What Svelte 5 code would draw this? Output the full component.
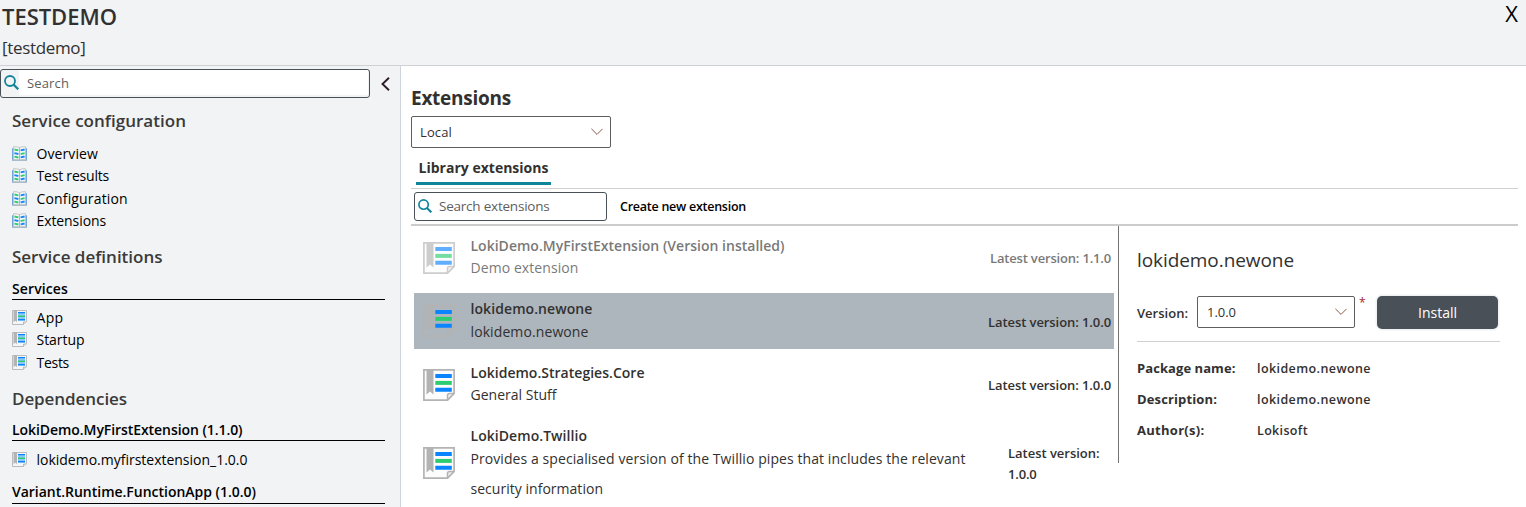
<script>
  // Tracks a label out (or in) so that it occupies the given width.
  function fit(node, width) {
    const natural = node.getBoundingClientRect().width;
    const spacing = (width - natural) / node.textContent.length;
    node.style.letterSpacing = spacing.toFixed(3) + 'px';
  }

  const config = [
    ['Overview', 61.5],
    ['Test results', 72.5],
    ['Configuration', 91.3],
    ['Extensions', 69.6]
  ];
  const services = [
    ['App', 27],
    ['Startup', 48],
    ['Tests', 32.5]
  ];
  const extensions = [
    { name: 'LokiDemo.MyFirstExtension (Version installed)', nw: 314, lines: [['Demo extension', 108]], version: 'Latest version: 1.1.0', vw: 121, state: 'installed' },
    { name: 'lokidemo.newone', nw: 122, lines: [['lokidemo.newone', 118]], version: 'Latest version: 1.0.0', vw: 123, state: 'selected' },
    { name: 'Lokidemo.Strategies.Core', nw: 174, lines: [['General Stuff', 86]], version: 'Latest version: 1.0.0', vw: 123, state: 'plain' },
    {
      name: 'LokiDemo.Twillio', nw: 116.5, state: 'tall',
      lines: [['Provides a specialised version of the Twillio pipes that includes the relevant', 495], ['security information', 132.5]]
    }
  ];
  const details = [
    ['Package name:', 98.5, 'lokidemo.newone', 114],
    ['Description:', 80, 'lokidemo.newone', 114],
    ['Author(s):', 67.5, 'Lokisoft', 51]
  ];
</script>

{#snippet page(size)}
  <svg class="page" width={size} height={size} viewBox="0 0 32 32">
    <path class="paper" d="M.9.9h30.2v23.6l-6.600 6.600H.9z" />
    <path d="M3.500 0h7v25.500l-3.500-3-3.500 3z" fill="#b3b3b3" />
    <path class="curl" d="M24.500 31v-4.500q0-2 2-2H31z" />
    <path d="M12.300 5h16.500v4H12.300zM12.300 18.800h16.500v4H12.300z" fill="#0a84ff" />
    <path d="M12.300 11.900h16.500v4H12.300z" fill="#2ecc71" />
  </svg>
{/snippet}

{#snippet smallPage()}
  <svg width="15" height="15" viewBox="0 0 15 15">
    <path d="M.5.500h14v11l-3 3H.5z" fill="#f4f5f6" stroke="#b9bbbd" />
    <path d="M1.500 0H5v12l-1.700-1.300L1.500 12z" fill="#b3b3b3" />
    <path d="M11.500 14.500v-2.500h3" fill="#ddd" stroke="#b9bbbd" />
    <path d="M6 2h7v9H6z" fill="#8cc8f5" />
    <path d="M6 2h7v1.300H6zM6 9h7v1.300H6z" fill="#0a84ff" />
    <path d="M6 5.600h7v1.400H6z" fill="#2ecc71" />
  </svg>
{/snippet}

{#snippet book()}
  <svg width="15" height="15" viewBox="0 0 15 15">
    <path d="M0 2.300h2V14H0zM13 2.300h2V14h-2z" fill="#75a5d2" />
    <path d="M0 13.500h15V15H0z" fill="#a9bccd" />
    <path d="M1.500.7Q5 .3 7.500 1.700 10 .3 13.500.7V13.500Q10 13 7.500 14 5 13 1.500 13.500z" fill="#f6f6f6" stroke="#c0c2c4" stroke-width=".9" />
    <path d="M7.500 1.500V14" stroke="#b5b5b5" />
    <path d="M2.400 3.500l4 .9M8.600 8.100l4-.9M2.400 10.600l4 .9" stroke="#2ecc71" stroke-width="1.800" />
    <path d="M8.600 4.400l4-.9M2.400 7.100l4 .9M8.600 11.400l4-.9" stroke="#1687ff" stroke-width="1.800" />
  </svg>
{/snippet}

{#snippet lens(size)}
  <svg class="lens" width={size} height={size} viewBox="0 0 15 15" fill="none" stroke="#138499">
    <circle cx="6" cy="6" r="5" stroke-width="1.800" />
    <path d="M9.600 9.600l4.700 4.700" stroke-width="2.200" />
  </svg>
{/snippet}

{#snippet chevron()}
  <svg width="12" height="8" viewBox="0 0 12 8" fill="none" stroke="#8a5a48" stroke-width="1">
    <path d="M.4.8L6 6.400 11.600.8" />
  </svg>
{/snippet}

<header>
  <div class="titles">
    <h1><span use:fit={115}>TESTDEMO</span></h1>
    <p><span use:fit={83.5}>[testdemo]</span></p>
  </div>
  <button class="close">X</button>
</header>

<div class="body">
  <aside>
    <div class="top">
      <div class="field side">{@render lens(15)}<div class="entry"><span use:fit={42}>Search</span></div></div>
      <svg class="collapse" width="9" height="14" viewBox="0 0 9 14" fill="none" stroke="#2c1c2c" stroke-width="1.900"><path d="M8 .8L1.500 7 8 13.200" /></svg>
    </div>
    <div class="nav">
      <h2 class="first"><span use:fit={174}>Service configuration</span></h2>
      {#each config as [label, w]}
        <div class="item">{@render book()}<span use:fit={w}>{label}</span></div>
      {/each}
      <h2><span use:fit={150.5}>Service definitions</span></h2>
      <h3><span use:fit={56}>Services</span></h3>
      {#each services as [label, w]}
        <div class="item">{@render smallPage()}<span use:fit={w}>{label}</span></div>
      {/each}
      <h2><span use:fit={115}>Dependencies</span></h2>
      <h3><span use:fit={230.5}>LokiDemo.MyFirstExtension (1.1.0)</span></h3>
      <div class="item">{@render smallPage()}<span use:fit={211}>lokidemo.myfirstextension_1.0.0</span></div>
      <h3 class="spaced"><span use:fit={244}>Variant.Runtime.FunctionApp (1.0.0)</span></h3>
    </div>
  </aside>

  <main>
    <h4><span use:fit={100}>Extensions</span></h4>
    <div class="select source"><span use:fit={32}>Local</span>{@render chevron()}</div>
    <div class="tabs"><div class="tab"><span use:fit={130}>Library extensions</span></div></div>
    <div class="tools">
      <div class="field ext">{@render lens(14)}<div class="entry"><span use:fit={110.5}>Search extensions</span></div></div>
      <span class="create"><span use:fit={126}>Create new extension</span></span>
    </div>
    <div class="split">
      <div class="list">
        {#each extensions as e}
          <div class="row {e.state}">
            {@render page(32)}
            <div class="text">
              <div class="name"><span use:fit={e.nw}>{e.name}</span></div>
              {#each e.lines as [line, w]}
                <div class="line"><span use:fit={w}>{line}</span></div>
              {/each}
            </div>
            <div class="version">
              {#if e.version}
                <span use:fit={e.vw}>{e.version}</span>
              {:else}
                <div><span use:fit={91.5}>Latest version:</span></div>
                <div><span use:fit={28.5}>1.0.0</span></div>
              {/if}
            </div>
          </div>
        {/each}
      </div>
      <section>
        <h5><span use:fit={157}>lokidemo.newone</span></h5>
        <div class="form">
          <div class="label"><span use:fit={51}>Version:</span></div>
          <div class="select"><span use:fit={29}>1.0.0</span>{@render chevron()}</div>
          <span class="required">*</span>
          <button class="install"><span use:fit={39}>Install</span></button>
        </div>
        <div class="details">
          {#each details as [key, kw, value, vw]}
            <div class="pair">
              <b><span use:fit={kw}>{key}</span></b>
              <i><span use:fit={vw}>{value}</span></i>
            </div>
          {/each}
        </div>
      </section>
    </div>
  </main>
</div>

<style>
  :global(body) {
    background: #fff;
    overflow: hidden;
    font-family: 'Open Sans', 'Noto Sans', sans-serif;
    color: #323130;
  }
  :global(*) { box-sizing: border-box; }
  h1, h2, h3, h4, h5, p { margin: 0; }
  span { white-space: nowrap; }
  svg { display: block; flex: none; }
  button { font-family: inherit; border: 0; padding: 0; }

  header {
    height: 66px;
    display: flex;
    justify-content: space-between;
    background: #f1f3f5;
    border-bottom: 1px solid #ced0d3;
  }
  .titles { padding-left: 2px; }
  h1 { font-size: 22px; font-weight: 600; line-height: 32px; }
  p { font-size: 17px; line-height: 31px; }
  .close {
    background: none;
    color: #000;
    font-size: 22px;
    line-height: 27px;
    height: 27px;
    margin-right: 8px;
  }

  .body { display: flex; height: 441px; }
  aside {
    width: 401px;
    flex: none;
    background: #f1f3f5;
    border-right: 1px solid #ced4da;
  }
  .top { display: flex; align-items: center; padding-top: 3px; }
  .field {
    display: flex;
    height: 29px;
    border: 1px solid #495057;
    border-radius: 3px;
    font-size: 13px;
    line-height: 27px;
    color: #605e5c;
    background: #fff;
  }
  .field.side { width: 370px; background: #f1f3f5; padding: 0 1px 2px 3px; }
  .side .entry { flex: 1; background: #fff; padding-left: 8px; }
  .side .lens { margin-top: 5px; }
  .collapse { margin-left: 11px; }

  .nav { padding: 0 15px 0 12px; color: #000; }
  h2 { font-size: 17px; font-weight: 600; height: 48.800px; line-height: 50px; color: #3b3a39; }
  h2.first { height: 44.400px; line-height: 46px; }
  h3 {
    font-size: 14px;
    font-weight: 600;
    line-height: 15.400px;
    height: 19.200px;
    border-bottom: 1px solid #000;
    margin-bottom: 6.400px;
  }
  h3.spaced { margin-top: 14px; height: 20px; }
  .item { display: flex; align-items: center; gap: 9.500px; height: 22.400px; font-size: 14px; }

  main { flex: 1; padding: 17px 8px 0 10px; }
  h4 { font-size: 19px; font-weight: 700; line-height: 31px; height: 33px; }
  .select {
    display: flex;
    align-items: center;
    justify-content: space-between;
    height: 32px;
    border: 1px solid #605e5c;
    border-radius: 2px;
    padding: 0 7px 0 8px;
    font-size: 13px;
  }
  .source { width: 200px; }
  .tabs { height: 41px; border-bottom: 1px solid #d0d0d0; padding-left: 5px; display: flex; }
  .tab {
    width: 135px;
    height: 37px;
    padding-left: 2.500px;
    border-bottom: 3px solid #0f8599;
    font-size: 14px;
    font-weight: 700;
    line-height: 39px;
  }
  .tools { display: flex; height: 37px; padding: 3px 0 0 3px; border-bottom: 2px solid #ccc; }
  .field.ext { width: 193px; }
  .ext .lens { margin: 6px 0 0 3px; }
  .ext .entry { padding-left: 7px; font-size: 13.500px; }
  .create { margin-left: 13px; font-size: 12.500px; font-weight: 600; line-height: 30px; color: #000; }

  .split { display: flex; align-items: flex-start; }
  .list { width: 707px; padding: 4px 4px 0 3px; display: flex; flex-direction: column; gap: 7px; }
  .row { display: flex; height: 56px; padding: 0 3px 0 9px; align-items: center; }
  .text { align-self: flex-start; margin-left: 15.500px; flex: 1; padding-top: 7.600px; font-size: 14px; }
  .name { font-weight: 600; line-height: 16px; }
  .line { line-height: 28px; }
  .version { font-size: 13px; font-weight: 600; line-height: 21px; }
  .installed { opacity: .65; }
  .selected { background: #adb5bd; }
  .selected .version { padding-top: 2px; }
  .selected .line { line-height: 29px; }
  .plain .text, .tall .text { padding-top: 8.600px; }
  .plain .version, .plain .page { position: relative; top: 1px; }
  .tall { height: 88px; }
  .tall .line { line-height: 30px; }
  .tall .version { width: 103px; padding-top: 2px; }

  .paper { fill: #fcfcfc; stroke: #b3b3b3; stroke-width: 1.700; }
  .curl { fill: #eee; stroke: #b3b3b3; stroke-width: 1.500; }
  .selected .paper { fill: none; stroke: #b3b3b3; }
  .selected .curl { fill: none; }

  section { width: 382px; height: 237px; border-left: 1px solid #737373; padding: 18px 0 0 18px; }
  h5 { font-size: 19px; font-weight: 400; line-height: 32px; }
  .form { display: flex; align-items: flex-start; height: 66px; padding-top: 20px; border-bottom: 1px solid #d0d0d0; }
  .label { width: 60px; font-size: 13px; font-weight: 600; line-height: 35px; }
  .form .select { width: 158px; padding-left: 9px; }
  .required { width: 22px; padding-left: 4px; font-size: 12px; line-height: 14px; color: #a4262c; }
  .install {
    width: 121px;
    height: 33px;
    border-radius: 5px;
    background: #495057;
    color: #fff;
    font-size: 14px;
    box-shadow: 0 0 0 1.500px #eff1f3;
  }
  .details { padding-top: 11px; font-size: 13px; line-height: 31px; }
  .pair { display: flex; }
  b { width: 120px; font-weight: 700; }
  i { font-style: normal; font-weight: 600; font-size: 12.500px; }
</style>
